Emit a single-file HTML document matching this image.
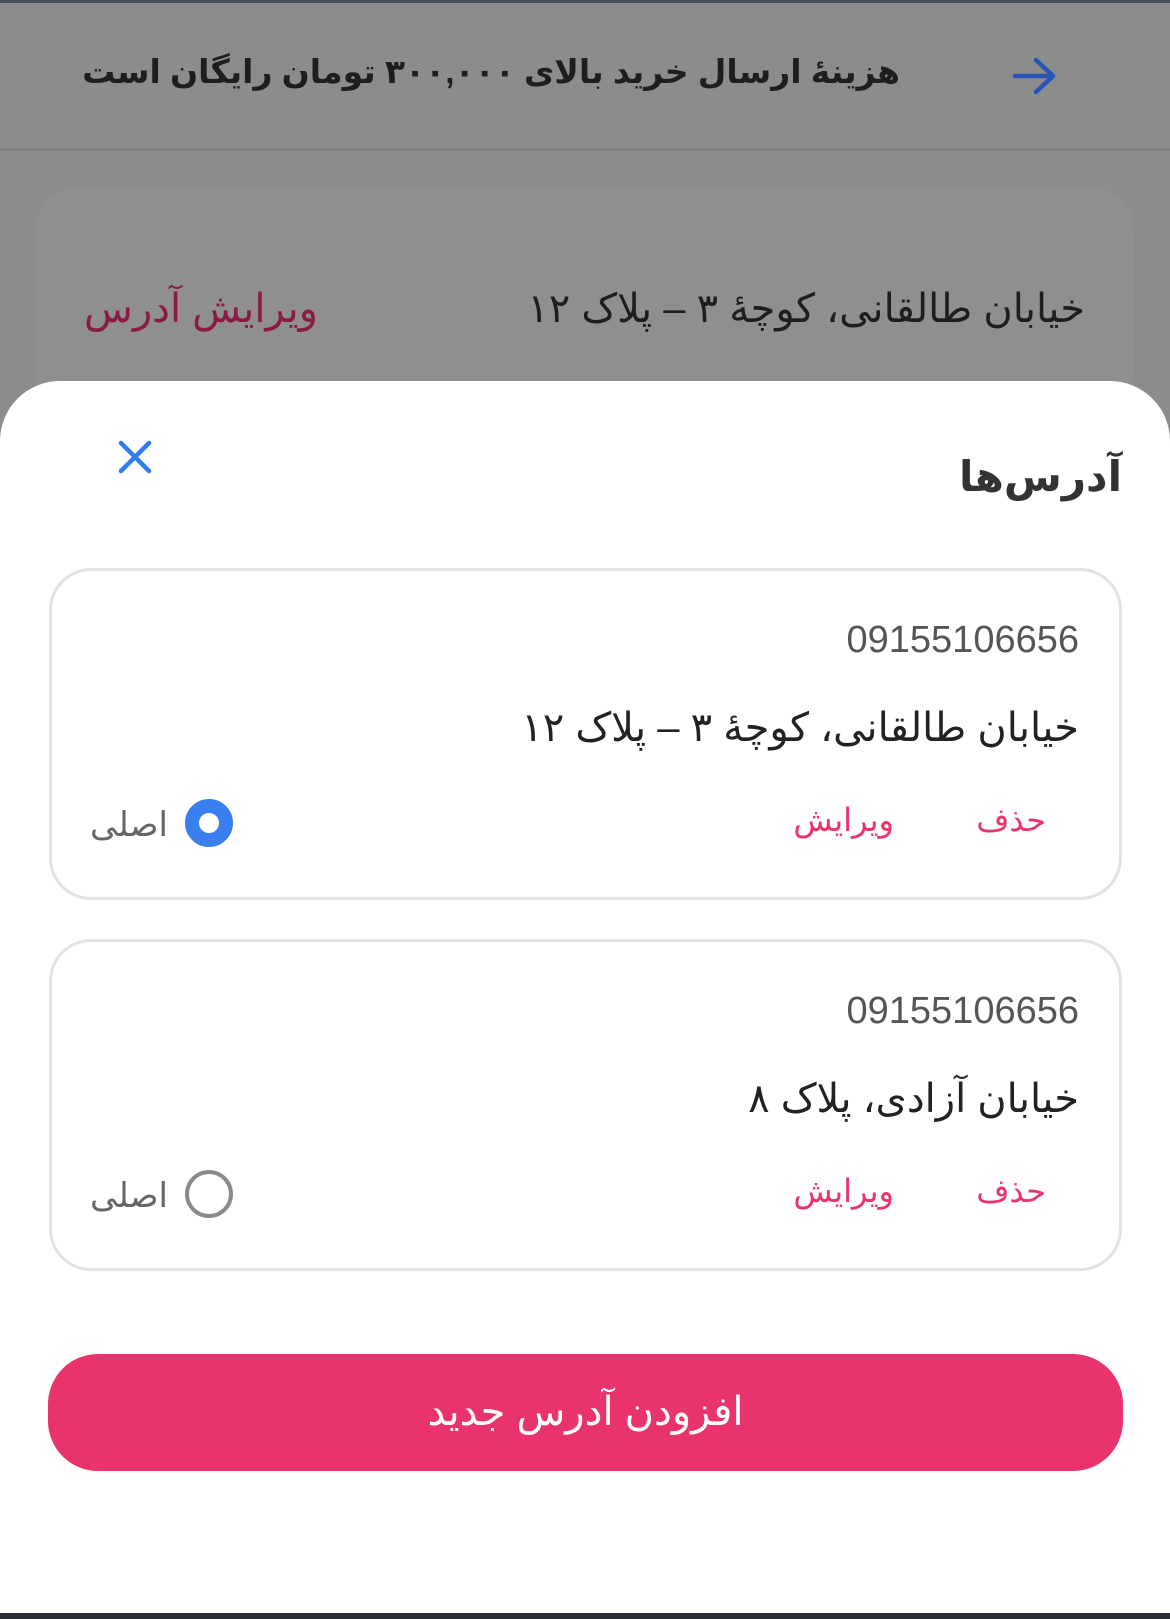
<!DOCTYPE html>
<html lang="fa" dir="rtl"><head><meta charset="utf-8">
<style>
*{margin:0;padding:0;box-sizing:border-box}
body{width:1170px;height:1619px;overflow:hidden;background:#8c8c8c;position:relative;font-family:"Liberation Sans","Noto Sans CJK SC","DejaVu Sans",sans-serif}
.abs{position:absolute;white-space:nowrap}
.topline{position:absolute;left:0;top:0;width:1170px;height:3px;background:#4a4f5c}
.div{position:absolute;left:0;top:148px;width:1170px;height:3px;background:#7e7e7e}
.bgcard{position:absolute;left:37px;top:188px;width:1097px;height:260px;border-radius:40px;background:#8f8f8f}
.sheet{position:absolute;left:0;top:381px;width:1170px;height:1238px;background:#fff;border-radius:60px 60px 0 0}
.card{position:absolute;left:49px;width:1073px;height:332px;border:3px solid #e2e2e2;border-radius:42px;background:#fff}
.phone{position:absolute;right:40px;top:48px;font-size:38px;color:#555;direction:ltr}
.addr{position:absolute;right:40px;top:134px;font-size:40px;color:#222}
.act{position:absolute;top:230px;font-size:32px;color:#e8356b}
.radio{position:absolute;left:133px;top:228px;width:48px;height:48px;border-radius:50%}
.lbl{position:absolute;left:38px;top:234px;font-size:34px;color:#666}
.btn{position:absolute;left:48px;top:1354px;width:1075px;height:117px;border-radius:50px;background:#e9346b;color:#fff;font-size:40px;text-align:center;line-height:117px}
.bottom{position:absolute;left:0;top:1613px;width:1170px;height:6px;background:#2a2d33}
</style></head><body>
<div class="topline"></div>
<div class="abs" style="right:270px;top:52px;font-size:33px;font-weight:bold;color:#1e1e1e">هزینهٔ ارسال خرید بالای ۳۰۰,۰۰۰ تومان رایگان است</div>
<svg class="abs" style="left:1012px;top:56px" width="46" height="40" viewBox="0 0 46 40"><path d="M3 20H41M24 4L41 20L24 36" fill="none" stroke="#2a55b8" stroke-width="4.5" stroke-linecap="round" stroke-linejoin="round"/></svg>
<div class="div"></div>
<div class="bgcard"></div>
<div class="abs" style="right:85px;top:286px;font-size:40px;color:#1e1e1e">خیابان طالقانی، کوچهٔ ۳ – پلاک ۱۲</div>
<div class="abs" style="left:84px;top:286px;font-size:40px;color:#8b1a45">ویرایش آدرس</div>
<div class="sheet"></div>
<svg class="abs" style="left:118px;top:440px" width="34" height="34" viewBox="0 0 34 34"><path d="M3 3L31 31M31 3L3 31" stroke="#2f7cf0" stroke-width="4.5" stroke-linecap="round"/></svg>
<div class="abs" style="right:48px;top:452px;font-size:42px;font-weight:bold;color:#333">آدرس‌ها</div>

<div class="card" style="top:568px">
<div class="phone">09155106656</div>
<div class="addr">خیابان طالقانی، کوچهٔ ۳ – پلاک ۱۲</div>
<div class="act" style="right:73px">حذف</div>
<div class="act" style="right:225px">ویرایش</div>
<div class="radio" style="border:14px solid #3a7ff0"></div>
<div class="lbl">اصلی</div>
</div>

<div class="card" style="top:939px">
<div class="phone">09155106656</div>
<div class="addr">خیابان آزادی، پلاک ۸</div>
<div class="act" style="right:73px">حذف</div>
<div class="act" style="right:225px">ویرایش</div>
<div class="radio" style="border:4px solid #8a8a8a"></div>
<div class="lbl">اصلی</div>
</div>

<div class="btn">افزودن آدرس جدید</div>
<div class="bottom"></div>
</body></html>
